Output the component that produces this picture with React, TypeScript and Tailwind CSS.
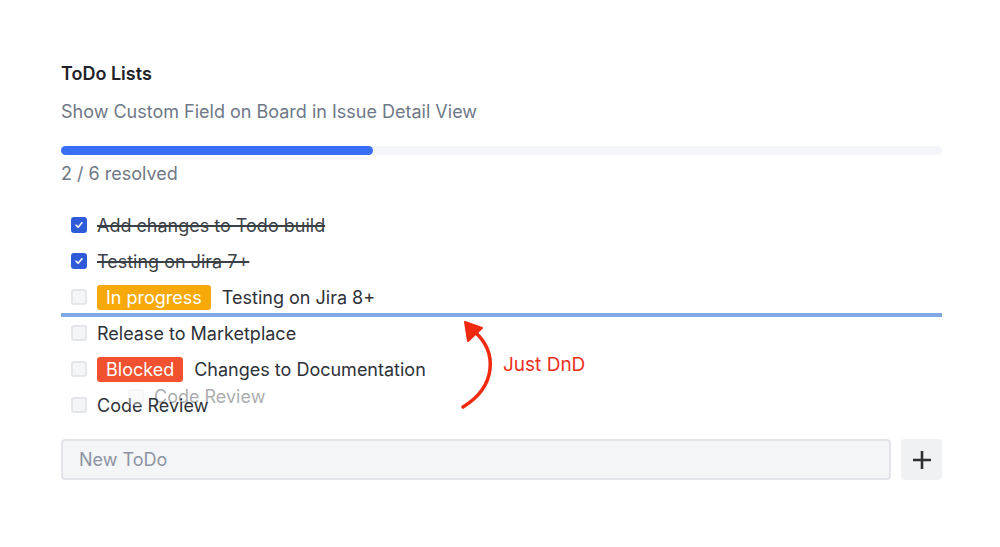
import React from "react";

function Check({ checked }: { checked?: boolean }) {
  return checked ? (
    <span className="flex h-[16px] w-[16px] items-center justify-center rounded-[3px] bg-[#2f5bd9]">
      <svg width="10" height="10" viewBox="0 0 10 10">
        <path d="M2 5.2 L4.1 7.2 L8 2.8" fill="none" stroke="white" strokeWidth="1.6" strokeLinecap="round" strokeLinejoin="round" />
      </svg>
    </span>
  ) : (
    <span className="block h-[16px] w-[16px] rounded-[3px] border-2 border-[#e4e6ea] bg-[#f4f5f7]" />
  );
}

function Row({ checked, done, badge, text }: { checked?: boolean; done?: boolean; badge?: { label: string; cls: string }; text: string }) {
  return (
    <div className="flex h-[36px] items-center">
      <div className="flex w-[36px] justify-center">
        <Check checked={checked} />
      </div>
      {badge && (
        <span className={`mr-[11px] flex h-[25px] items-center rounded-[3px] px-[9px] text-white ${badge.cls}`}>{badge.label}</span>
      )}
      <span className={done ? "text-[#3b3f46] line-through decoration-[1.5px]" : "text-[#2e3138]"}>{text}</span>
    </div>
  );
}

export default function App() {
  return (
    <div className="h-[547px] w-[1000px] bg-white" style={{ fontFamily: "Inter, 'Noto Sans', sans-serif" }}>
      <div className="w-[1003px] px-[61px] pt-[62px]">
        <div className="text-[18px] font-semibold leading-[24px] text-[#1f2329]">ToDo Lists</div>
        <div className="mt-[14px] text-[18px] leading-[24px] text-[#6f7887]">Show Custom Field on Board in Issue Detail View</div>
        <div className="mt-[22px] h-[9px] w-full rounded-full bg-[#f4f5f8]">
          <div className="h-full w-[312px] rounded-full bg-[#3a6ff5]" />
        </div>
        <div className="mt-[7px] text-[18px] leading-[24px] text-[#6f7887]">2 / 6 resolved</div>

        <div className="relative mt-[21px] text-[18px]">
          <Row checked done text="Add changes to Todo build" />
          <Row checked done text="Testing on Jira 7+" />
          <Row badge={{ label: "In progress", cls: "bg-[#f8a90a]" }} text="Testing on Jira 8+" />
          <div className="relative z-10 -my-[2px] h-[4px] bg-[#7ea9e3]" />
          <Row text="Release to Marketplace" />
          <Row badge={{ label: "Blocked", cls: "bg-[#f2522f]" }} text="Changes to Documentation" />
          <Row text="Code Review" />

          <div className="pointer-events-none absolute left-[67px] top-[176px] flex items-center gap-[10px] opacity-40">
            <span className="block h-[16px] w-[16px] rounded-[3px] border-2 border-[#e6e8ec] bg-[#f4f5f7]" />
            <span className="text-[#2e3138]">Code Review</span>
          </div>

          <svg className="absolute left-[394px] top-[107px]" width="60" height="100" viewBox="0 0 60 100">
            <path d="M8 93 C 42 72, 42 38, 20 18" fill="none" stroke="#ef2a10" strokeWidth="3.5" strokeLinecap="round" />
            <path d="M10 8 L27 14 L13 27 Z" fill="#ef2a10" stroke="#ef2a10" strokeWidth="2" strokeLinejoin="round" />
          </svg>
          <div className="absolute left-[442px] top-[146px] text-[19px] leading-[24px] text-[#e8301c]">Just DnD</div>
        </div>

        <div className="mt-[16px] flex h-[41px] gap-[10px]">
          <div className="flex flex-1 items-center rounded-[4px] border-2 border-[#e2e4e9] bg-[#f4f5f7] px-[16px] text-[18px] text-[#8c94a3]">
            New ToDo
          </div>
          <button className="flex w-[41px] items-center justify-center rounded-[4px] bg-[#f0f1f3]">
            <svg width="22" height="22" viewBox="0 0 22 22">
              <path d="M11 2 V20 M2 11 H20" stroke="#2d2f33" strokeWidth="2.6" />
            </svg>
          </button>
        </div>
      </div>
    </div>
  );
}
